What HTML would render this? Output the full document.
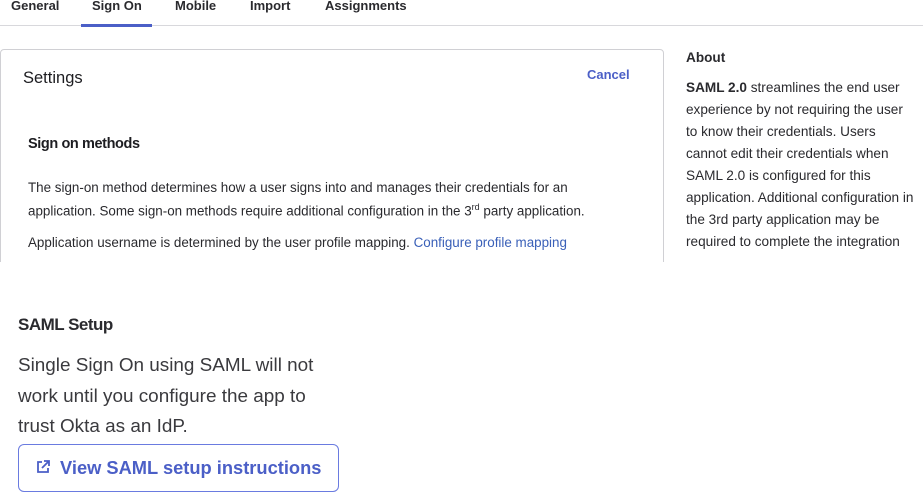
<!DOCTYPE html>
<html><head><meta charset="utf-8"><style>
*{margin:0;padding:0;box-sizing:border-box}
body{width:923px;height:492px;background:#fff;font-family:"Liberation Sans",sans-serif;color:#1d1d21;position:relative;overflow:hidden}
.a{position:absolute;white-space:nowrap}
.tab{position:absolute;top:-2px;font-size:13px;font-weight:bold;color:#2a2a2e}
p.a{font-size:13.4px;color:#2a2a2e}
.ab{position:absolute;left:686px;font-size:13.6px;color:#2a2a2e;white-space:nowrap}
.big{position:absolute;left:18px;font-size:18.9px;color:#3a3a3e;white-space:nowrap}
</style></head><body>
<div class="tab" style="left:11px">General</div>
<div class="tab" style="left:92px">Sign On</div>
<div class="tab" style="left:175px">Mobile</div>
<div class="tab" style="left:250px">Import</div>
<div class="tab" style="left:325px">Assignments</div>
<div class="a" style="left:0;top:25px;width:923px;height:1px;background:#d8d8dc"></div>
<div class="a" style="left:81px;top:24px;width:71px;height:3px;background:#4b5fc7"></div>

<div class="a" style="left:0;top:49px;width:664px;height:230px;border:1px solid #d0d0d4;border-radius:4px"></div>
<div class="a" style="left:0;top:262px;width:923px;height:40px;background:#fff"></div>
<div class="a" style="left:23px;top:69px;font-size:16.5px;color:#1d1d21">Settings</div>
<div class="a" style="left:587px;top:67px;font-size:13px;font-weight:bold;color:#4b5fc7">Cancel</div>
<div class="a" style="left:28px;top:136px;font-size:14.5px;font-weight:bold;color:#1d1d21;letter-spacing:-0.4px">Sign on methods</div>
<p class="a" style="left:28px;top:180px">The sign-on method determines how a user signs into and manages their credentials for an</p>
<p class="a" style="left:28px;top:202px">application. Some sign-on methods require additional configuration in the 3<sup style="font-size:9px">rd</sup> party application.</p>
<p class="a" style="left:28px;top:235px">Application username is determined by the user profile mapping. <span style="color:#3a60b8">Configure profile mapping</span></p>

<div class="ab" style="top:50px;font-weight:bold">About</div>
<div class="ab" style="top:80px"><b>SAML 2.0</b> streamlines the end user</div>
<div class="ab" style="top:102px">experience by not requiring the user</div>
<div class="ab" style="top:124px">to know their credentials. Users</div>
<div class="ab" style="top:146px">cannot edit their credentials when</div>
<div class="ab" style="top:168px">SAML 2.0 is configured for this</div>
<div class="ab" style="top:190px">application. Additional configuration in</div>
<div class="ab" style="top:212px">the 3rd party application may be</div>
<div class="ab" style="top:234px">required to complete the integration</div>

<div class="a" style="left:18px;top:315px;font-size:17px;font-weight:bold;color:#2a2a2e;letter-spacing:-0.5px">SAML Setup</div>
<div class="big" style="top:355px">Single Sign On using SAML will not</div>
<div class="big" style="top:386px">work until you configure the app to</div>
<div class="big" style="top:416px">trust Okta as an IdP.</div>
<div class="a" style="left:18px;top:444px;width:321px;height:48px;border:1.5px solid #6a7be0;border-radius:6px"></div>
<svg class="a" style="left:35px;top:459px" width="16" height="16" viewBox="0 0 16 16" fill="none" stroke="#4b5fc7" stroke-width="1.8"><path d="M7 3H3v10h10V9"/><path d="M9 2h5v5M14 2L7 9"/></svg>
<div class="a" style="left:60px;top:457px;font-size:18.3px;font-weight:bold;color:#4b5fc7">View SAML setup instructions</div>
</body></html>
